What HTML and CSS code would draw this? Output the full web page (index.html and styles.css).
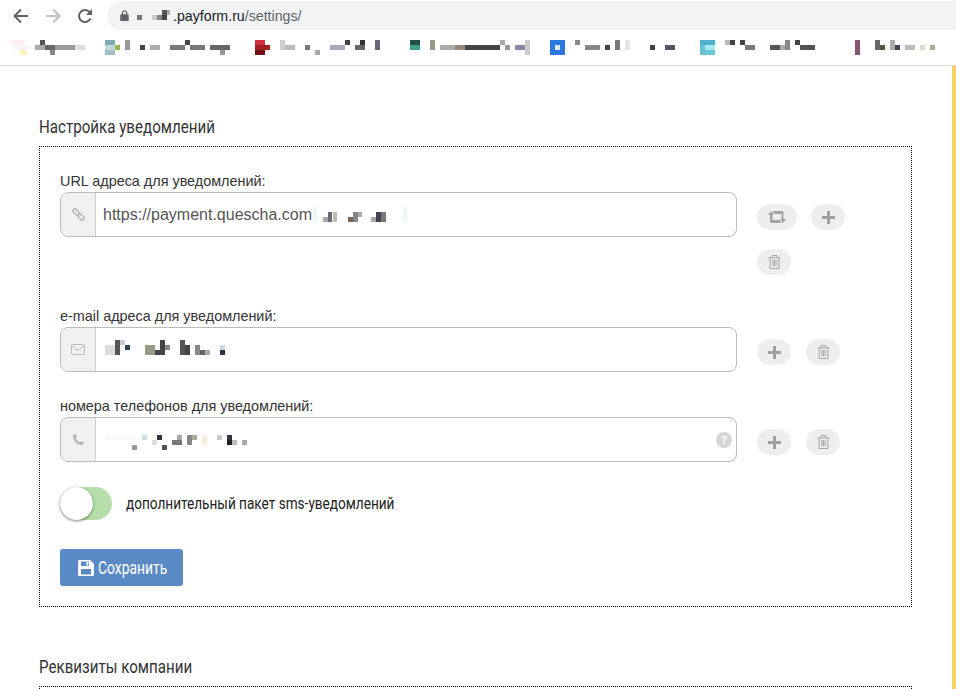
FILE: index.html
```html
<!DOCTYPE html>
<html>
<head>
<meta charset="UTF-8">
<link rel="stylesheet" href="styles.css">
<title>Настройки</title>
</head>
<body>
    <!-- browser chrome -->
    <div class="browser">
        <div class="toolbar">
            <div class="nav-icons">
                <svg width="16" height="16" viewBox="0 0 16 16"><path d="M15 8H2M8 1.500 1.500 8 8 14.500" fill="none" stroke="#5f6368" stroke-width="2"/></svg>
                <svg width="16" height="16" viewBox="0 0 16 16"><path d="M1 8h13M8 1.500 14.500 8 8 14.500" fill="none" stroke="#bdc1c6" stroke-width="2"/></svg>
                <svg width="16" height="16" viewBox="0 0 16 16"><path d="M13.500 10.500A6 6 0 1 1 12.600 4.200" fill="none" stroke="#5f6368" stroke-width="2"/><path d="M15 1v6H9z" fill="#5f6368"/></svg>
            </div>
            <div class="address">
                <svg width="9" height="11" viewBox="0 0 10 13"><rect x="0" y="5" width="10" height="8" rx="1" fill="#5f6368"/><path d="M2.500 6V3.500a2.500 2.500 0 0 1 5 0V6" fill="none" stroke="#5f6368" stroke-width="1.500"/></svg>
                <svg class="address-blur" width="34" height="14" viewBox="0 0 34 14" shape-rendering="crispEdges">
                    <rect x="0" y="6" width="5" height="5" fill="#777"/>
                    <rect x="15" y="6" width="5" height="5" fill="#ccc"/>
                    <rect x="20" y="6" width="5" height="5" fill="#888"/>
                    <rect x="25" y="1" width="5" height="5" fill="#555"/>
                    <rect x="25" y="6" width="5" height="5" fill="#444"/>
                    <rect x="30" y="1" width="3" height="5" fill="#aaa"/>
                </svg>
                <span class="host">.payform.ru</span><span class="path">/settings/</span>
            </div>
        </div>
        <div class="bookmarks">
            <svg width="956" height="25" viewBox="0 0 956 25" shape-rendering="crispEdges">
                <g transform="translate(0 -40)">
                    <rect x="10" y="40" width="15" height="5" fill="#fdeef0"/><rect x="15" y="45" width="15" height="5" fill="#f4f6f8"/><rect x="20" y="50" width="6" height="5" fill="#fbf0b8"/>
                    <rect x="40" y="40" width="5" height="5" fill="#555"/><rect x="35" y="45" width="10" height="5" fill="#aaa"/><rect x="45" y="45" width="10" height="5" fill="#666"/><rect x="55" y="45" width="20" height="5" fill="#999"/><rect x="75" y="45" width="10" height="5" fill="#ddd"/><rect x="50" y="50" width="5" height="5" fill="#888"/>
                    <rect x="105" y="40" width="10" height="5" fill="#7fa8b0"/><rect x="115" y="45" width="5" height="5" fill="#9aba50"/><rect x="105" y="45" width="10" height="5" fill="#c3d8dc"/><rect x="105" y="50" width="10" height="5" fill="#a0c0c8"/>
                    <rect x="125" y="40" width="5" height="10" fill="#999"/><rect x="140" y="45" width="5" height="5" fill="#444"/><rect x="150" y="45" width="10" height="5" fill="#aaa"/><rect x="170" y="45" width="15" height="5" fill="#777"/><rect x="185" y="40" width="5" height="5" fill="#444"/><rect x="190" y="45" width="15" height="5" fill="#777"/><rect x="210" y="45" width="20" height="5" fill="#666"/><rect x="220" y="50" width="5" height="5" fill="#999"/>
                    <rect x="255" y="40" width="10" height="5" fill="#d03040"/><rect x="255" y="45" width="15" height="5" fill="#a02020"/><rect x="255" y="50" width="10" height="5" fill="#701015"/>
                    <rect x="280" y="40" width="5" height="10" fill="#ccc"/><rect x="285" y="45" width="10" height="5" fill="#bbb"/><rect x="305" y="45" width="5" height="5" fill="#777"/><rect x="315" y="50" width="5" height="5" fill="#aaa"/><rect x="330" y="45" width="15" height="5" fill="#aab"/><rect x="345" y="40" width="5" height="5" fill="#444"/><rect x="355" y="45" width="10" height="5" fill="#666"/><rect x="360" y="40" width="5" height="5" fill="#333"/><rect x="375" y="40" width="5" height="10" fill="#667"/>
                    <rect x="410" y="40" width="10" height="5" fill="#205048"/><rect x="410" y="45" width="10" height="5" fill="#40a088"/>
                    <rect x="430" y="40" width="5" height="10" fill="#998"/><rect x="440" y="45" width="15" height="5" fill="#aaa"/><rect x="455" y="45" width="10" height="5" fill="#987"/><rect x="465" y="45" width="15" height="5" fill="#444"/><rect x="480" y="45" width="20" height="5" fill="#444"/><rect x="500" y="40" width="5" height="5" fill="#aaa"/><rect x="505" y="45" width="5" height="5" fill="#999"/><rect x="515" y="45" width="10" height="5" fill="#88a"/><rect x="525" y="40" width="5" height="15" fill="#ccc"/>
                    <rect x="550" y="40" width="15" height="15" fill="#2a78e0"/><rect x="555" y="45" width="5" height="5" fill="#dce8f8"/>
                    <rect x="575" y="40" width="5" height="5" fill="#888"/><rect x="585" y="45" width="15" height="5" fill="#888"/><rect x="605" y="45" width="5" height="5" fill="#444"/><rect x="615" y="40" width="5" height="10" fill="#777"/><rect x="625" y="40" width="5" height="10" fill="#e4e4e4"/><rect x="650" y="45" width="5" height="5" fill="#444"/><rect x="665" y="45" width="10" height="5" fill="#556"/>
                    <rect x="700" y="40" width="15" height="5" fill="#50b0c8"/><rect x="700" y="45" width="5" height="10" fill="#68c0d4"/><rect x="705" y="45" width="10" height="5" fill="#a8e8f0"/><rect x="705" y="50" width="10" height="5" fill="#68c8d8"/>
                    <rect x="725" y="40" width="5" height="5" fill="#bbb"/><rect x="730" y="40" width="5" height="5" fill="#444"/><rect x="740" y="40" width="5" height="5" fill="#444"/><rect x="745" y="45" width="10" height="5" fill="#777"/><rect x="770" y="45" width="10" height="5" fill="#555"/><rect x="780" y="45" width="5" height="5" fill="#aaa"/><rect x="785" y="40" width="5" height="10" fill="#888"/><rect x="795" y="40" width="5" height="5" fill="#444"/><rect x="800" y="45" width="15" height="5" fill="#555"/>
                    <rect x="855" y="40" width="5" height="15" fill="#855570"/>
                    <rect x="875" y="40" width="5" height="10" fill="#666"/><rect x="880" y="45" width="5" height="5" fill="#554"/><rect x="890" y="40" width="5" height="10" fill="#aaa"/><rect x="895" y="45" width="5" height="5" fill="#445"/><rect x="905" y="45" width="10" height="5" fill="#bbb"/><rect x="920" y="45" width="5" height="5" fill="#ddc"/><rect x="930" y="45" width="5" height="5" fill="#aa9"/>
                </g>
            </svg>
        </div>
    </div>

    <div class="page">
        <h2 class="section-title">Настройка уведомлений</h2>
        <div class="section-box">

            <!-- url -->
            <div class="field field-url">
                <label class="field-label">URL адреса для уведомлений:</label>
                <div class="field-row">
                    <div class="input-group">
                        <span class="addon">
                            <svg width="13" height="13" viewBox="0 0 13 13"><g fill="none" stroke="#b5b5b5" stroke-width="1.400"><rect x="-3.500" y="-2" width="7" height="4" rx="2" transform="translate(4 4) rotate(45)"/><rect x="-3.500" y="-2" width="7" height="4" rx="2" transform="translate(9 9) rotate(45)"/></g></svg>
                        </span>
                        <span class="input-value">https://payment.quescha.com</span>
                        <svg class="blur" width="100" height="15" viewBox="0 0 100 15" shape-rendering="crispEdges">
                            <rect x="0" y="0" width="4" height="15" fill="#eef5fb"/>
                            <rect x="10" y="10" width="5" height="5" fill="#aaa"/><rect x="15" y="5" width="4" height="10" fill="#667"/><rect x="20" y="5" width="4" height="10" fill="#bbb"/>
                            <rect x="35" y="10" width="5" height="5" fill="#765"/><rect x="40" y="5" width="5" height="10" fill="#888"/><rect x="45" y="5" width="4" height="5" fill="#aaa"/>
                            <rect x="58" y="10" width="5" height="5" fill="#aaa"/><rect x="63" y="5" width="5" height="10" fill="#445"/><rect x="68" y="5" width="5" height="10" fill="#777"/>
                            <rect x="90" y="0" width="4" height="15" fill="#eef5fb"/>
                        </svg>
                    </div>
                    <div class="actions">
                        <button class="action action-wide">
                            <svg width="18" height="12" viewBox="0 0 18 12"><path d="M0 4 3 0l3 4H4.500V9H11.500l2 3H3.500A1.500 1.500 0 0 1 2 10.500V4zM18 8l-3 4-3-4h1.500V3H6.500l-2-3h9A1.500 1.500 0 0 1 15.500 1.500V8z" fill="#a3a3a3"/></svg>
                        </button>
                        <button class="action"><svg width="13" height="13" viewBox="0 0 13 13"><path d="M5 0h3v5h5v3H8v5H5V8H0V5h5z" fill="#a0a0a0"/></svg></button>
                        <button class="action"><svg width="13" height="16" viewBox="0 0 12 14"><path d="M.5 3h11M4 3V1h4v2M2 3v10h8V3M4.500 5v6M6 5v6M7.500 5v6" fill="none" stroke="#a8a8a8"/></svg></button>
                    </div>
                </div>
            </div>

            <!-- email -->
            <div class="field field-email">
                <label class="field-label">e-mail адреса для уведомлений:</label>
                <div class="field-row">
                    <div class="input-group">
                        <span class="addon">
                            <svg width="14" height="11" viewBox="0 0 14 11"><rect x=".5" y=".5" width="13" height="10" rx="1" fill="none" stroke="#bbb"/><path d="M1 2l6 4.500L13 2" fill="none" stroke="#bbb"/></svg>
                        </span>
                        <svg class="blur-value" width="125" height="20" viewBox="0 0 125 20" shape-rendering="crispEdges">
                            <rect x="0" y="5" width="10" height="10" fill="#ddd"/><rect x="10" y="0" width="5" height="15" fill="#555"/><rect x="15" y="0" width="5" height="5" fill="#ccd"/><rect x="20" y="5" width="5" height="5" fill="#345"/>
                            <rect x="40" y="5" width="10" height="10" fill="#998"/><rect x="50" y="10" width="10" height="5" fill="#444"/><rect x="55" y="0" width="5" height="10" fill="#444"/><rect x="60" y="5" width="5" height="5" fill="#888"/>
                            <rect x="75" y="0" width="5" height="15" fill="#555"/><rect x="80" y="5" width="5" height="10" fill="#444"/><rect x="90" y="5" width="5" height="10" fill="#888"/><rect x="95" y="10" width="5" height="5" fill="#666"/><rect x="100" y="10" width="5" height="5" fill="#aaa"/><rect x="115" y="10" width="5" height="5" fill="#334"/><rect x="115" y="5" width="5" height="5" fill="#cdd"/>
                        </svg>
                    </div>
                    <div class="actions">
                        <button class="action"><svg width="13" height="13" viewBox="0 0 13 13"><path d="M5 0h3v5h5v3H8v5H5V8H0V5h5z" fill="#a0a0a0"/></svg></button>
                        <button class="action"><svg width="13" height="16" viewBox="0 0 12 14"><path d="M.5 3h11M4 3V1h4v2M2 3v10h8V3M4.500 5v6M6 5v6M7.500 5v6" fill="none" stroke="#a8a8a8"/></svg></button>
                    </div>
                </div>
            </div>

            <!-- phone -->
            <div class="field field-phone">
                <label class="field-label">номера телефонов для уведомлений:</label>
                <div class="field-row">
                    <div class="input-group">
                        <span class="addon">
                            <svg width="11" height="11" viewBox="0 0 11 11"><path d="M2.500 0 4 3 2.800 4.200C3.500 5.800 5 7.300 6.800 8.200L8 7l3 1.500C10.800 10 9.500 11 8.500 11 4 10.500.5 7 0 2.500 0 1.500 1 .2 2.500 0z" fill="#b5b5b5"/></svg>
                        </span>
                        <svg class="blur-value" width="145" height="20" viewBox="0 0 145 20" shape-rendering="crispEdges">
                            <rect x="0" y="5" width="30" height="5" fill="#f7f9fb"/><rect x="27" y="15" width="5" height="5" fill="#999"/><rect x="37" y="5" width="5" height="5" fill="#cdd"/><rect x="52" y="5" width="5" height="5" fill="#334"/><rect x="47" y="10" width="5" height="5" fill="#ddd"/><rect x="57" y="15" width="5" height="5" fill="#555"/>
                            <rect x="67" y="10" width="10" height="5" fill="#777"/><rect x="72" y="5" width="5" height="5" fill="#aaa"/><rect x="82" y="5" width="5" height="10" fill="#888"/><rect x="87" y="5" width="5" height="5" fill="#aa9"/>
                            <rect x="97" y="5" width="5" height="10" fill="#f5efdc"/><rect x="112" y="5" width="5" height="5" fill="#ccc"/><rect x="122" y="5" width="5" height="5" fill="#334"/><rect x="122" y="10" width="5" height="5" fill="#222"/><rect x="127" y="10" width="5" height="5" fill="#bbb"/><rect x="137" y="10" width="5" height="5" fill="#aaa"/>
                        </svg>
                        <svg class="help" width="16" height="16" viewBox="0 0 16 16"><circle cx="8" cy="8" r="8" fill="#d5d5d5"/><path d="M5.300 6.200C5.500 4.500 6.600 3.800 8 3.800c1.600 0 2.800 1 2.800 2.300 0 2-2.100 1.900-2.100 3.300H7c0-2.300 2-2.200 2-3.300 0-.5-.4-.8-1-.8s-1 .3-1.200 1.100zM7 10.300h1.800v1.800H7z" fill="#fff"/></svg>
                    </div>
                    <div class="actions">
                        <button class="action"><svg width="13" height="13" viewBox="0 0 13 13"><path d="M5 0h3v5h5v3H8v5H5V8H0V5h5z" fill="#a0a0a0"/></svg></button>
                        <button class="action"><svg width="13" height="16" viewBox="0 0 12 14"><path d="M.5 3h11M4 3V1h4v2M2 3v10h8V3M4.500 5v6M6 5v6M7.500 5v6" fill="none" stroke="#a8a8a8"/></svg></button>
                    </div>
                </div>
            </div>

            <div class="toggle-row">
                <span class="toggle"><span class="knob"></span></span>
                <span class="toggle-label">дополнительный пакет sms-уведомлений</span>
            </div>

            <button class="save">
                <svg width="16" height="16" viewBox="0 0 16 16"><path fill-rule="evenodd" d="M1.500 0H12l4 4v10.500a1.500 1.500 0 0 1-1.500 1.500h-13A1.500 1.500 0 0 1 0 14.500v-13A1.500 1.500 0 0 1 1.500 0zM3 1.500V6h8V1.500zM8.500 2H10.300V5.400H8.500zM3 9v5.500h10V9z" fill="#fff"/></svg>
                <span class="save-label">Сохранить</span>
            </button>
        </div>

        <h2 class="section-title section-title-next">Реквизиты компании</h2>
        <div class="section-box"></div>
    </div>
</body>
</html>
```

FILE: styles.css
```css
*{
    box-sizing: border-box;
}
html, body{
    height: 689px;
    overflow: hidden;
}
body{
    margin: 0;
    background: #fff;
    font-family: "Liberation Sans", Arial, sans-serif;
    color: #333;
}
svg{
    display: block;
}

/* browser */
.browser{
    height: 66px;
    border-bottom: 1px solid #dadce0;
}
.toolbar{
    display: flex;
    align-items: center;
    height: 35px;
    padding: 1px 0 5px 13px;
}
.nav-icons{
    display: flex;
    gap: 16px;
    width: 94px;
}
.address{
    flex: 1;
    display: flex;
    align-items: center;
    height: 29px;
    padding-left: 13px;
    background: #f1f3f4;
    border-radius: 15px 0 0 15px;
    font-size: 14.2px;
}
.address-blur{
    margin-left: 8px;
    margin-right: 2px;
}
.host{
    color: #202124;
}
.path{
    color: #5f6368;
}
.bookmarks{
    height: 30px;
    padding-top: 5px;
}

/* page */
.page{
    height: 623px;
    padding: 50px 40px 0 39px;
    border-right: 4px solid #f7d163;
    overflow: hidden;
}
/* the original narrow font is not installed, so Roboto is squeezed to its width */
.section-title{
    margin: 0 0 8px;
    height: 22px;
    font-family: Roboto, sans-serif;
    font-size: 18px;
    line-height: 22px;
    font-weight: normal;
    color: #333;
    transform: scaleX(.84);
    transform-origin: left;
}
.section-title-next{
    margin-top: 49px;
    margin-bottom: 8px;
}
.section-box{
    width: 873px;
    height: 461px;
    padding: 25px 20px 0;
    border: 1px dotted #000;
}

/* fields */
.field-label{
    display: block;
    height: 20px;
    font-size: 14.4px;
    line-height: 18px;
    color: #333;
}
.field-row{
    display: flex;
    align-items: flex-start;
    gap: 20px;
}
.field-url{
    height: 135px;
}
.field-email{
    height: 90px;
}
.field-phone{
    height: 90px;
}
.input-group{
    flex: none;
    display: flex;
    align-items: center;
    width: 677px;
    height: 45px;
    border: 1px solid #bbb;
    border-radius: 8px;
    font-size: 16px;
    color: #555;
}
.addon{
    flex: none;
    display: flex;
    align-items: center;
    justify-content: center;
    width: 35px;
    height: 100%;
    background: #f0f0f0;
    border-right: 1px solid #ccc;
    border-radius: 7px 0 0 7px;
}
.input-value{
    margin-left: 7px;
}
.blur{
    margin-left: 1px;
}
.blur-value{
    margin-left: 9px;
}
.help{
    margin-left: auto;
    margin-right: 4px;
}

/* round buttons */
.actions{
    display: flex;
    flex-wrap: wrap;
    gap: 19px 14px;
    width: 95px;
    padding-top: 12px;
}
.field-email .actions, .field-phone .actions{
    gap: 15px;
}
.action{
    display: flex;
    align-items: center;
    justify-content: center;
    width: 34px;
    height: 26px;
    padding: 0;
    background: #eee;
    border: 0;
    border-radius: 13px;
}
.action-wide{
    width: 40px;
}

/* toggle */
.toggle-row{
    display: flex;
    align-items: center;
    gap: 14px;
    height: 33px;
}
.toggle{
    display: block;
    position: relative;
    width: 52px;
    height: 33px;
    background: #b5dea8;
    border-radius: 17px;
}
.knob{
    position: absolute;
    left: 0;
    top: 0;
    width: 33px;
    height: 33px;
    background: #fff;
    border-radius: 50%;
    box-shadow: 0 1px 3px rgba(0,0,0,.5);
}
.toggle-label{
    font-family: Roboto, sans-serif;
    font-size: 16px;
    color: #222;
    white-space: nowrap;
    transform: scaleX(.85);
    transform-origin: left;
}

/* save */
.save{
    display: flex;
    align-items: center;
    gap: 4px;
    width: 123px;
    height: 37px;
    margin-top: 29px;
    padding: 0 0 0 18px;
    background: #5a8ac6;
    border: 0;
    border-radius: 3px;
    color: #fff;
    font-family: Roboto, sans-serif;
    font-size: 18px;
}
.save svg{
    flex: none;
}
.save-label{
    white-space: nowrap;
    transform: scaleX(.77);
    transform-origin: left;
}
```
